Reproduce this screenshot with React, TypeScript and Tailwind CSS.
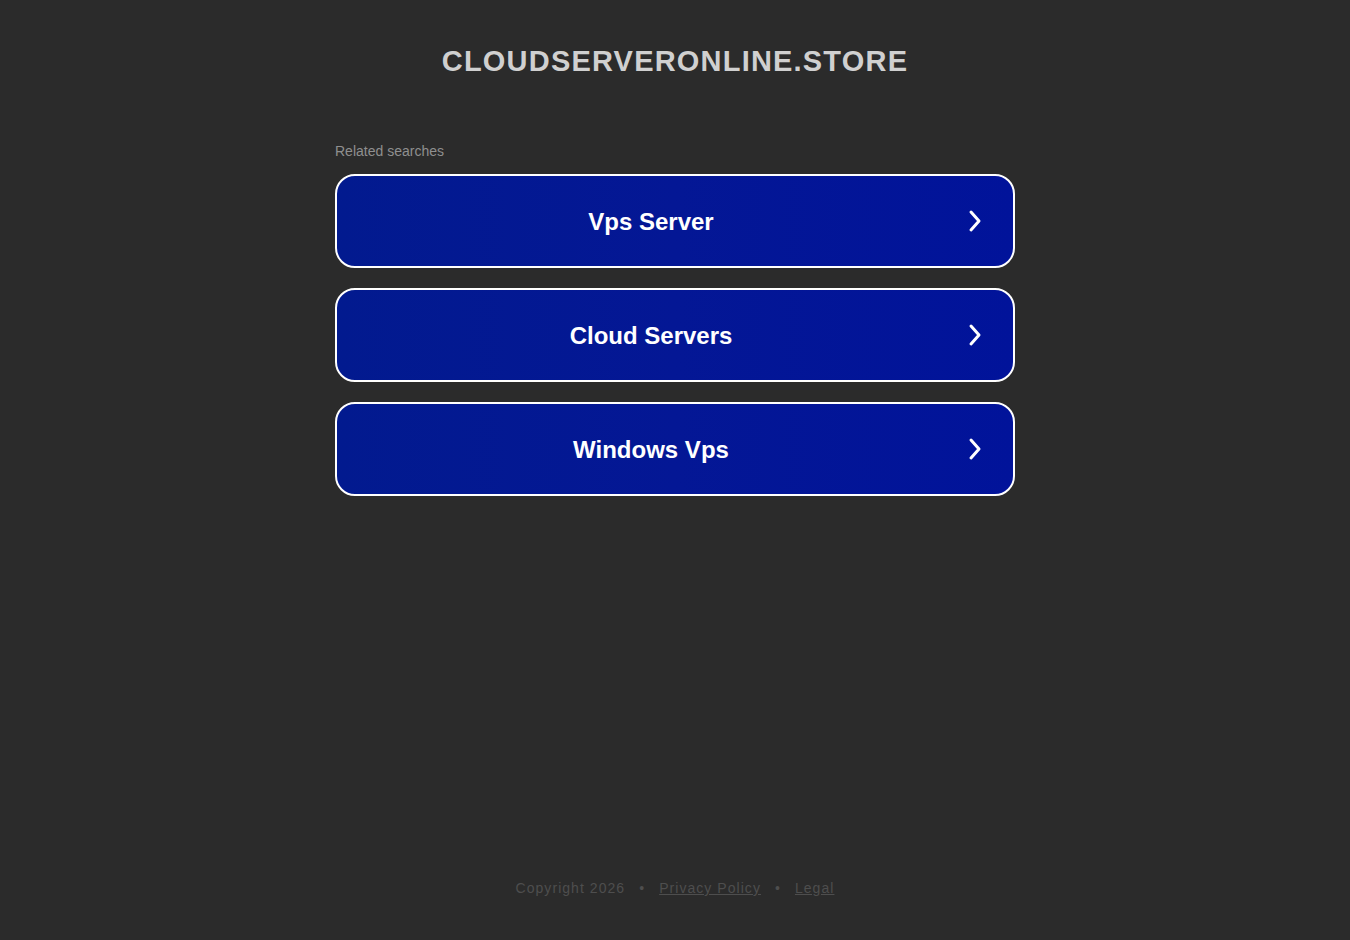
import React from 'react';

const SEARCHES = ['Vps Server', 'Cloud Servers', 'Windows Vps'];

const Chevron = () => (
    <svg width="16" height="24" viewBox="0 0 16 24" fill="none" className="absolute right-[30px] top-1/2 -translate-y-1/2">
        <path d="M4 3 L12 12 L4 21" stroke="white" strokeWidth="3" strokeLinecap="round" strokeLinejoin="round" />
    </svg>
);

export default function App() {
    return (
        <div className="min-h-[940px] bg-[#2b2b2b] flex flex-col items-center font-['Liberation_Sans',Arial,sans-serif]">
            <header className="pt-[44px] h-[130px]">
                <h1 className="text-[29px] leading-[34px] font-bold tracking-[1.2px] text-[#d0d0d0]">
                    CLOUDSERVERONLINE.STORE
                </h1>
            </header>

            {/* related searches */}
            <div className="w-[680px] mt-[13px]">
                <p className="text-[14px] leading-[16px] text-[#8f8f8f] mb-[15px]">Related searches</p>
                <div className="flex flex-col gap-[20px]">
                    {SEARCHES.map((s) => (
                        <a
                            key={s}
                            href="#"
                            className="relative h-[94px] rounded-[20px] border-2 border-white bg-gradient-to-r from-[#021a8f] via-[#041795] to-[#01139a] flex items-center justify-center"
                        >
                            <span className="text-white font-bold text-[24px] -ml-[48px] mt-[2px]">{s}</span>
                            <Chevron />
                        </a>
                    ))}
                </div>
            </div>

            <footer className="mt-auto pb-[41px] flex items-center gap-[14px] text-[14px] tracking-[1.05px] text-[#4e4e4e]">
                <span>Copyright 2026</span>
                <span>•</span>
                <a href="#" className="underline">Privacy Policy</a>
                <span>•</span>
                <a href="#" className="underline">Legal</a>
            </footer>
        </div>
    );
}
